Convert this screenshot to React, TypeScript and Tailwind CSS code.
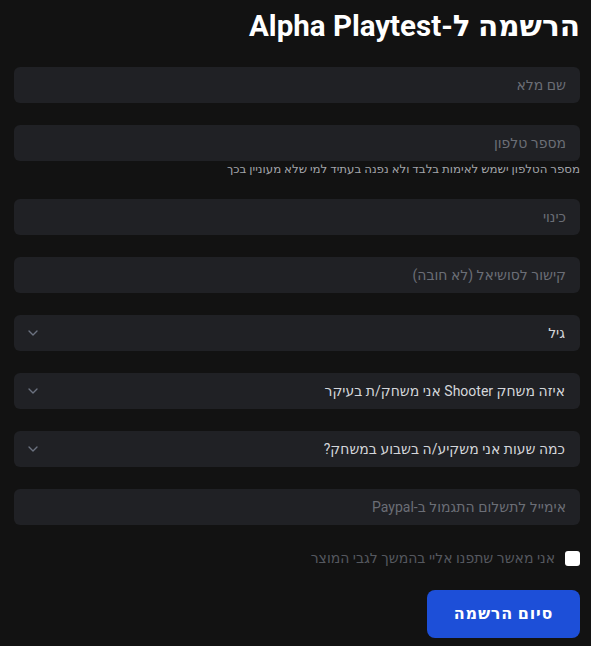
import { ChevronDown } from "lucide-react";

const font = { fontFamily: 'Roboto, "Noto Sans", "DejaVu Sans", sans-serif' };

function Field({ placeholder }: { placeholder: string }) {
  return (
    <input
      placeholder={placeholder}
      className="h-9 w-full rounded-md bg-[#202125] px-[14px] text-sm text-gray-200 placeholder:text-[#6b6e76] outline-none"
    />
  );
}

function SelectBox({ label }: { label: string }) {
  return (
    <div className="flex h-9 w-full items-center justify-between rounded-md bg-[#202125] pr-[15px] pl-[11px]">
      <span className="text-sm text-[#d4d6da]">{label}</span>
      <ChevronDown className="h-4 w-4 text-[#6b7280]" strokeWidth={2} />
    </div>
  );
}

export default function App() {
  return (
    <div dir="rtl" className="min-h-[646px] bg-[#121212] pl-[14px] pr-[11px] pt-[8px] text-white" style={font}>
      <h1 className="text-right text-[29.5px] font-bold leading-9">הרשמה ל-Alpha Playtest</h1>

      <div className="mt-[23px] flex flex-col gap-[22px]">
        <Field placeholder="שם מלא" />
        <div>
          <Field placeholder="מספר טלפון" />
          <p className="text-[11.8px] leading-4 text-[#a3a5aa]">
            מספר הטלפון ישמש לאימות בלבד ולא נפנה בעתיד למי שלא מעוניין בכך
          </p>
        </div>
        <Field placeholder="כינוי" />
        <Field placeholder="קישור לסושיאל (לא חובה)" />
        <SelectBox label="גיל" />
        <SelectBox label="איזה משחק Shooter אני משחק/ת בעיקר" />
        <SelectBox label="כמה שעות אני משקיע/ה בשבוע במשחק?" />
        <Field placeholder="אימייל לתשלום התגמול ב-Paypal" />
      </div>

      <label className="mt-[23px] flex items-center gap-[10px]">
        <span className="h-[15px] w-[15px] rounded-[3px] bg-white" />
        <span className="text-sm text-[#55585f]">אני מאשר שתפנו אליי בהמשך לגבי המוצר</span>
      </label>

      <div className="mt-[22px] flex">
        <button className="h-12 w-[153px] rounded-lg bg-[#1d4fd8] text-base font-bold tracking-wider text-white">
          סיום הרשמה
        </button>
      </div>
    </div>
  );
}
